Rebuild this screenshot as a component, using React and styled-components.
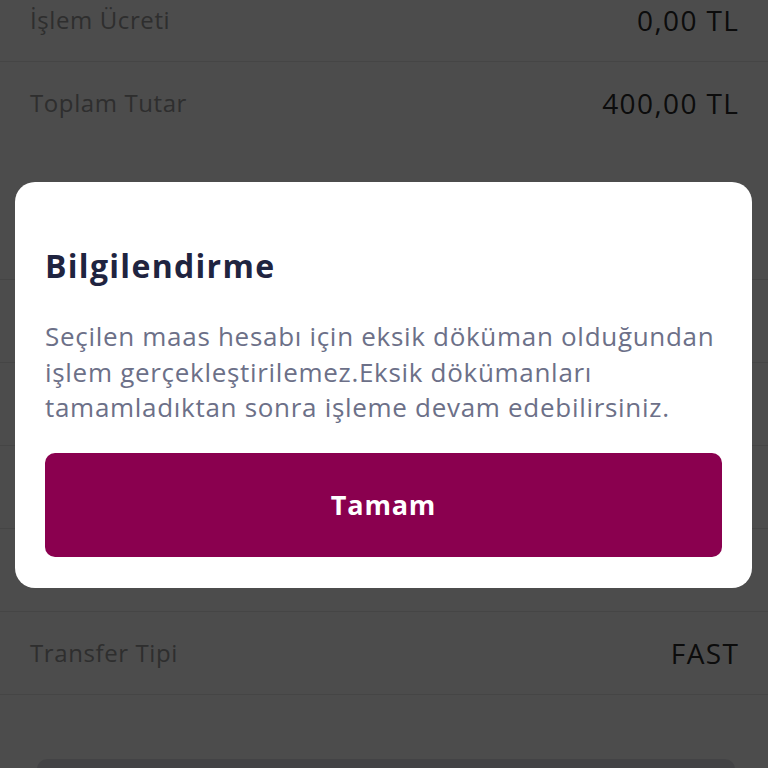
import React from 'react';
import styled, { createGlobalStyle } from 'styled-components';

const GlobalStyle = createGlobalStyle`
  html, body {
    margin: 0;
    padding: 0;
    background: #ffffff;
    font-family: "Open Sans", "Noto Sans", sans-serif;
  }
`;

const Page = styled.div`
  position: relative;
  width: 768px;
  height: 768px;
  overflow: hidden;
  background: #ffffff;
`;

const DetailList = styled.div`
  margin-top: -21px;
  display: flex;
  flex-direction: column;
`;

const DetailRow = styled.div`
  display: flex;
  justify-content: space-between;
  align-items: flex-start;
  height: ${(p) => (p.$tall ? 218 : 83)}px;
  box-sizing: border-box;
  padding: 23px 30px 0;
  border-bottom: 1px solid #e6e6e6;
`;

const Label = styled.span`
  font-size: 24px;
  line-height: 36px;
  letter-spacing: 0.6px;
  color: #9a9a9a;
`;

const Value = styled.span`
  font-size: 28px;
  line-height: 36px;
  letter-spacing: 1.4px;
  margin-right: -1.4px;
  color: #2a2a2a;
`;

const BottomButton = styled.div`
  margin: 64px 33px 0 37px;
  height: 60px;
  border-radius: 10px;
  background: #e0e2e6;
`;

const Overlay = styled.div`
  position: absolute;
  inset: 0;
  background: rgba(0, 0, 0, 0.7);
  display: flex;
  align-items: center;
  justify-content: center;
  padding: 2px 16px 0 15px;
`;

const Modal = styled.div`
  width: 100%;
  box-sizing: border-box;
  background: #ffffff;
  border-radius: 20px;
  padding: 62px 30px 31px;
`;

const Title = styled.h2`
  margin: 0;
  font-size: 32px;
  line-height: 44px;
  letter-spacing: 1.3px;
  font-weight: 700;
  color: #1f2440;
`;

const Message = styled.p`
  margin: 31px 0 27px;
  font-size: 26px;
  line-height: 35.5px;
  letter-spacing: 0.7px;
  color: #6c7088;
`;

const OkButton = styled.button`
  display: block;
  width: 100%;
  height: 104px;
  border: none;
  border-radius: 10px;
  background: #8a004f;
  color: #ffffff;
  font-family: "Open Sans", "Noto Sans", sans-serif;
  font-size: 27px;
  letter-spacing: 0.8px;
  font-weight: 700;
`;

const rows = [
  { label: 'İşlem Ücreti', value: '0,00 TL' },
  { label: 'Toplam Tutar', value: '400,00 TL', tall: true },
  { label: 'Gönderen Hesap', value: '' },
  { label: 'Alıcı Adı', value: '' },
  { label: 'IBAN', value: '' },
  { label: 'Açıklama', value: '' },
  { label: 'Transfer Tipi', value: 'FAST' },
];

export default function App() {
  return (
    <Page>
      <GlobalStyle />
      <DetailList>
        {rows.map((row) => (
          <DetailRow key={row.label} $tall={row.tall}>
            <Label>{row.label}</Label>
            <Value>{row.value}</Value>
          </DetailRow>
        ))}
      </DetailList>
      <BottomButton />
      <Overlay>
        <Modal>
          <Title>Bilgilendirme</Title>
          <Message>
            Seçilen maas hesabı için eksik döküman olduğundan işlem gerçekleştirilemez.Eksik dökümanları tamamladıktan sonra işleme devam edebilirsiniz.
          </Message>
          <OkButton>Tamam</OkButton>
        </Modal>
      </Overlay>
    </Page>
  );
}
